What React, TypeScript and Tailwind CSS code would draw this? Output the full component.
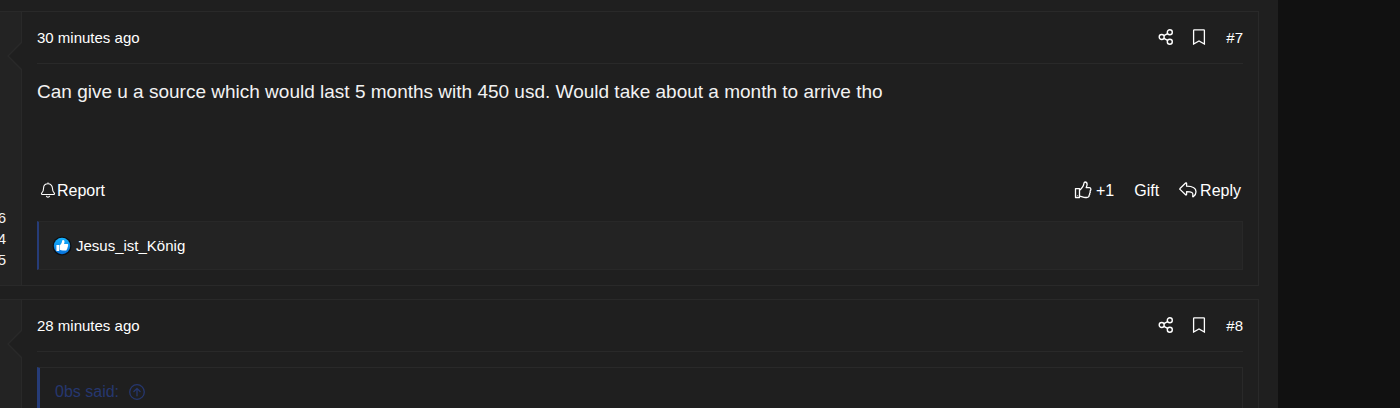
import type { ReactNode } from 'react'

type IconProps = { className?: string }

function ShareIcon({ className }: IconProps) {
  return (
    <svg viewBox="0 0 16 16" className={className} fill="none" stroke="currentColor" strokeWidth="1.4" aria-hidden="true">
      <circle cx="3.700" cy="8" r="2.500" />
      <circle cx="11.800" cy="3.300" r="2.500" />
      <circle cx="11.800" cy="12.700" r="2.500" />
      <path d="M5.900 6.700 9.600 4.600M5.900 9.300l3.700 2.100" />
    </svg>
  )
}

function BookmarkIcon({ className }: IconProps) {
  return (
    <svg viewBox="0 0 16 16" className={className} fill="none" stroke="currentColor" strokeWidth="1.3" aria-hidden="true">
      <path d="M2.600 1.400a.6.6 0 0 1 .6-.6h9.600a.6.6 0 0 1 .6.6V15L8 11.900l-5.400 3.100z" />
    </svg>
  )
}

function BellIcon({ className }: IconProps) {
  return (
    <svg viewBox="0 0 16 16" className={className} fill="none" stroke="currentColor" strokeWidth="1.100" strokeLinejoin="round" aria-hidden="true">
      <path d="M8 .4v1.400M8 1.800c-2.600 0-4.400 1.900-4.400 4.300 0 3-.9 4.100-1.900 5.100-.5.600-.2 1.300.5 1.300h11.600c.7 0 1-.7.5-1.300-1-1-1.900-2.100-1.900-5.100 0-2.400-1.800-4.300-4.400-4.300z" />
      <path d="M6.300 13.900c.3.800.9 1.200 1.700 1.200s1.400-.4 1.700-1.200" />
    </svg>
  )
}

function ThumbIcon({ className }: IconProps) {
  return (
    <svg viewBox="0 0 18 18" className={className} fill="none" stroke="currentColor" strokeWidth="1.300" strokeLinejoin="round" aria-hidden="true">
      <path d="M1.500 7.600h4v8.900h-4z" />
      <path d="M5.500 9.300c1.300-.9 2-2 2.700-3 .8-1.100 1.300-1.700 1.500-3 .2-1.300.3-2.300 1.300-2.300 1.500 0 2.100 1 2.100 2.400 0 1.200-.6 2.100-.9 3.200h3c1 0 1.700.8 1.700 1.700 0 .8-.4 1.300-.8 1.600.3.700.3 1.700-.4 2.400.2.900-.1 1.500-.6 2 .1 1.300-.7 2.200-2.300 2.200h-1.500c-2.300 0-3.600-1.300-5.800-1.300" />
      <path d="M3.500 14.300v.6" />
    </svg>
  )
}

function ReplyIcon({ className }: IconProps) {
  return (
    <svg viewBox="0 0 18 18" className={className} fill="none" stroke="currentColor" strokeWidth="1.300" strokeLinejoin="round" aria-hidden="true">
      <path d="M1 7.500 6.600 2c.4-.4 1-.1 1 .5v2.700c5.700.1 9.400 1.200 9.400 5.600 0 2-1 3.600-2.500 4.800-.4.300-1-.1-.8-.6 1-3.400-1-4.300-6.100-4.400v2.700c0 .6-.6.900-1 .5L1 8.400a.6.6 0 0 1 0-.9z" />
    </svg>
  )
}

function LikeBadge({ className }: IconProps) {
  return (
    <svg viewBox="0 0 20 20" className={className} aria-hidden="true">
      <defs>
        <linearGradient id="like-fill" x1="0" y1="0" x2="0" y2="1">
          <stop offset="0" stopColor="#15b2ff" />
          <stop offset="1" stopColor="#0872dc" />
        </linearGradient>
      </defs>
      <circle cx="10" cy="10" r="9.500" fill="#0b1016" />
      <circle cx="10" cy="10" r="8.200" fill="url(#like-fill)" />
      <path
        fill="#fff"
        d="M4.400 9h2.800v6H4.400zM7.700 9.300c1.400-1 2.200-2.300 2.400-4.200.1-.9.500-1.200 1-1.200 1.100 0 1.500.9 1.400 2-.1.800-.3 1.400-.5 2.100h3.100c.8 0 1.100.5 1.100 1 0 .5-.2.800-.5.9.4.600.3 1.300-.3 1.600.2.700 0 1.200-.5 1.400.1.900-.4 1.500-1.300 1.500h-2.800c-1.200 0-2.200-.2-3.100-.7z"
      />
    </svg>
  )
}

function JumpIcon({ className }: IconProps) {
  return (
    <svg viewBox="0 0 16 16" className={className} fill="none" stroke="currentColor" strokeWidth="1.300" strokeLinecap="round" strokeLinejoin="round" aria-hidden="true">
      <circle cx="8" cy="8" r="7.300" />
      <path d="M8 11.800V4.700M4.900 7.500 8 4.400l3.100 3.100" />
    </svg>
  )
}

function Post({
  time,
  number,
  stats = [],
  children,
}: {
  time: string
  number: number
  stats?: string[]
  children: ReactNode
}) {
  return (
    <article className="flex border-y border-r border-[#292929]">
      <aside className="relative flex w-[22px] shrink-0 flex-col items-end justify-end border-r border-[#292929] bg-[#232323] pr-[15px] pb-[15px]">
        {stats.map((stat) => (
          <span key={stat} className="flex w-full justify-end text-[15px] leading-[21px]">
            {stat}
          </span>
        ))}
        <svg viewBox="0 0 15 28" className="absolute top-[30px] -right-px h-7 w-[15px]" aria-hidden="true">
          <path d="M15 0 1 14l14 14" fill="#1f1f1f" stroke="#292929" strokeWidth="1.500" />
        </svg>
      </aside>
      <div className="min-w-0 flex-1 px-[15px] pb-[15px]">
        <header className="flex h-[52px] items-center justify-between border-b border-[#292929] pb-px text-[15px] leading-6 text-white">
          <a href="#time" className="pt-0.5">
            {time}
          </a>
          <div className="flex items-center">
            <button type="button" aria-label="Share" className="mr-[17px]">
              <ShareIcon className="size-4" />
            </button>
            <button type="button" aria-label="Bookmark" className="mr-[19px]">
              <BookmarkIcon className="size-4" />
            </button>
            <a href="#post" className="pt-0.5">
              #{number}
            </a>
          </div>
        </header>
        {children}
      </div>
    </article>
  )
}

export default function App() {
  return (
    <div className="h-screen overflow-hidden bg-[#111111] pr-[122px] font-['Liberation_Sans',Arial,sans-serif] text-[#f2f2f2]">
      <main className="flex min-h-screen flex-col gap-[13px] bg-[#1f1f1f] pt-[11px] pr-[19px]">
        <Post time="30 minutes ago" number={7} stats={['6', '4', '5']}>
          <p className="mt-[14px] min-h-[100px] text-[19px] leading-7">
            Can give u a source which would last 5 months with 450 usd. Would take about a month to arrive tho
          </p>
          <div className="flex h-6 items-center justify-between text-base text-white">
            <button type="button" className="ml-[3px] flex items-center gap-px">
              <BellIcon className="size-4" />
              <span className="pt-0.5">Report</span>
            </button>
            <div className="flex items-center gap-5">
              <button type="button" className="flex items-center gap-1">
                <ThumbIcon className="size-[18px]" />
                <span className="pt-0.5">+1</span>
              </button>
              <button type="button" className="pt-0.5">
                Gift
              </button>
              <button type="button" className="mr-0.5 flex items-center gap-[3px]">
                <ReplyIcon className="size-[18px]" />
                <span className="pt-0.5">Reply</span>
              </button>
            </div>
          </div>
          <div className="mt-[19px] flex h-[49px] items-center gap-1 border border-l-2 border-[#282828] border-l-[#263c78] bg-[#232323] pl-[13px] text-[15px] text-white">
            <LikeBadge className="size-5" />
            <a href="#member" className="pt-0.5">
              Jesus_ist_König
            </a>
          </div>
        </Post>
        <Post time="28 minutes ago" number={8}>
          <blockquote className="mt-[15px] min-h-[100px] border border-l-3 border-[#292929] border-l-[#263c78] px-[15px] pt-3 text-base text-[#26376f]">
            <a href="#quoted" className="flex items-center gap-[10px]">
              0bs said:
              <JumpIcon className="size-4" />
            </a>
          </blockquote>
        </Post>
      </main>
    </div>
  )
}
